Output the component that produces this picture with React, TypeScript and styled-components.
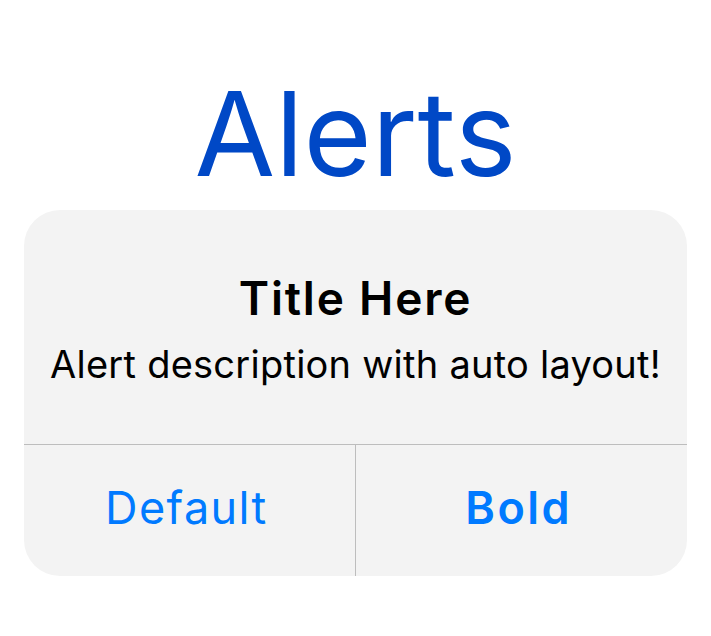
import React from "react";
import styled, { createGlobalStyle } from "styled-components";

const Global = createGlobalStyle`
  html, body { margin: 0; padding: 0; background: #ffffff; }
  body { font-family: Inter, "Noto Sans", sans-serif; }
`;

const Page = styled.div`
  width: 711px;
  height: 636px;
  box-sizing: border-box;
  padding: 64px 24px 0 24px;
  display: flex;
  flex-direction: column;
  align-items: stretch;
`;

const Heading = styled.h1`
  margin: 0 0 6px 0;
  font-size: 117px;
  line-height: 140px;
  font-weight: 400;
  color: #0048c6;
  text-align: center;
  letter-spacing: 0;
`;

const Card = styled.div`
  background: #f3f3f3;
  border-radius: 36px;
  overflow: hidden;
  display: flex;
  flex-direction: column;
  height: 366px;
`;

const Body = styled.div`
  box-sizing: border-box;
  height: 235px;
  padding-top: 60px;
  display: flex;
  flex-direction: column;
  align-items: center;
  gap: 15px;
  border-bottom: 1.5px solid #bdbdbd;
`;

const Title = styled.div`
  font-size: 46px;
  line-height: 56px;
  font-weight: 600;
  letter-spacing: 1.8px;
  color: #000;
`;

const Description = styled.div`
  font-size: 38px;
  line-height: 46px;
  font-weight: 400;
  letter-spacing: 0.25px;
  color: #000;
  white-space: nowrap;
`;

const Actions = styled.div`
  flex: 1;
  display: grid;
  grid-template-columns: 1fr 1.5px 1fr;
`;

const Separator = styled.div`
  background: #bdbdbd;
`;

const ActionButton = styled.button<{ $bold?: boolean }>`
  border: none;
  background: transparent;
  font-family: Inter, "Noto Sans", sans-serif;
  font-size: 45px;
  line-height: 54px;
  font-weight: ${(p) => (p.$bold ? 600 : 400)};
  letter-spacing: ${(p) => (p.$bold ? "2.4px" : "1.4px")};
  color: #007aff;
  display: flex;
  align-items: center;
  justify-content: center;
  padding: 0 6px 6px 0;
`;

export default function App() {
  return (
    <>
      <Global />
      <Page>
        <Heading>Alerts</Heading>
        <Card>
          <Body>
            <Title>Title Here</Title>
            <Description>Alert description with auto layout!</Description>
          </Body>
          <Actions>
            <ActionButton>Default</ActionButton>
            <Separator />
            <ActionButton $bold>Bold</ActionButton>
          </Actions>
        </Card>
      </Page>
    </>
  );
}
